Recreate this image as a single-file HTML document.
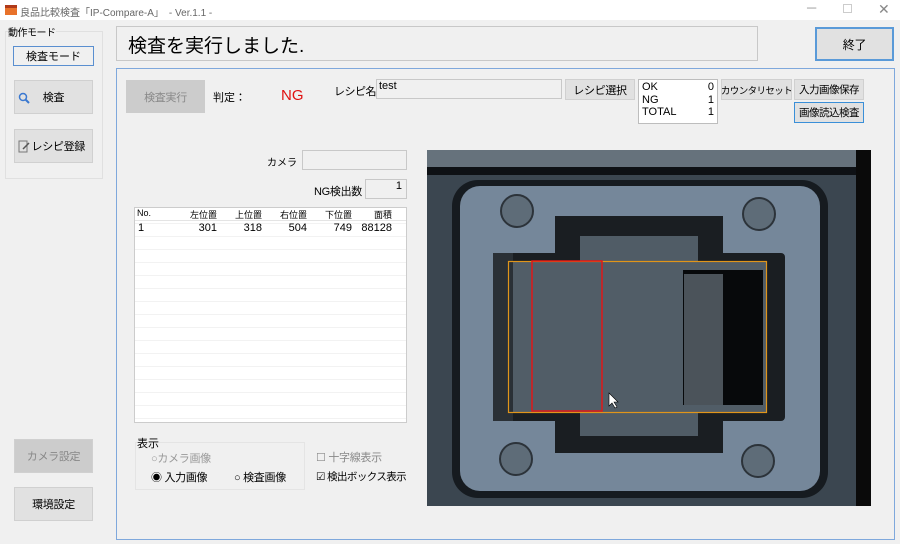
<!DOCTYPE html>
<html><head><meta charset="utf-8"><style>
*{box-sizing:border-box;margin:0;padding:0}
body{width:900px;height:544px;background:#f0f0f0;font-family:"Liberation Sans","Noto Sans CJK JP",sans-serif;font-size:12px;color:#000;position:relative;overflow:hidden;white-space:nowrap}
.a{position:absolute}
.btn{position:absolute;background:#e1e1e1;border:1px solid #d0d0d0;display:flex;align-items:center;justify-content:center;font-size:11px;letter-spacing:-0.3px;white-space:nowrap;overflow:hidden}
.box{position:absolute;background:#f0f0f0;border:1px solid #c8c8c8}
.w{position:absolute;background:#fff;border:1px solid #bdbdbd}
.r{position:absolute;text-align:right}
</style></head><body>
<div class="a" style="left:0;top:0;width:900px;height:20px;background:#fff"></div>
<div class="a" style="left:5px;top:5px;width:12px;height:10px;background:#e8722a;border-top:3px solid #b03a1a"></div>
<div class="a" style="left:20px;top:4px;font-size:10px;color:#666">良品比較検査「IP-Compare-A」　- Ver.1.1 -</div>
<div class="a" style="left:807px;top:0;font-size:13px;color:#999">─</div>
<div class="a" style="left:843px;top:4px;width:9px;height:9px;border:1px solid #ccc"></div>
<div class="a" style="left:878px;top:1px;font-size:14px;color:#888">✕</div>

<div class="a" style="left:5px;top:31px;width:98px;height:148px;border:1px solid #e0e0e0"></div>
<div class="a" style="left:8px;top:24px;font-size:10px;background:#f0f0f0;letter-spacing:-0.5px">動作モード</div>
<div class="a" style="left:13px;top:46px;width:81px;height:20px;border:1px solid #5a8fd0;background:#f0f0f0;display:flex;align-items:center;justify-content:center;font-size:11px">検査モード</div>
<div class="btn" style="left:14px;top:80px;width:79px;height:34px"><svg style="position:absolute;left:3px;top:11px" width="12" height="12"><circle cx="5" cy="5" r="3.5" fill="none" stroke="#3a78d0" stroke-width="1.5"/><path d="M7.5 7.5 L11 11" stroke="#3a78d0" stroke-width="2"/></svg>検査</div>
<div class="btn" style="left:14px;top:129px;width:79px;height:34px;justify-content:flex-end;padding-right:7px"><svg style="position:absolute;left:3px;top:10px" width="12" height="13"><rect x="1" y="1" width="8" height="11" fill="none" stroke="#777"/><path d="M5 9 L11 3" stroke="#555" stroke-width="1.5"/></svg>レシピ登録</div>
<div class="btn" style="left:14px;top:439px;width:79px;height:34px;background:#cccccc;color:#888">カメラ設定</div>
<div class="btn" style="left:14px;top:487px;width:79px;height:34px">環境設定</div>

<div class="box" style="left:116px;top:26px;width:642px;height:35px;"></div>
<div class="a" style="left:128px;top:31px;font-size:19px">検査を実行しました.</div>
<div class="btn" style="left:815px;top:27px;width:79px;height:34px;border:2px solid #5a9ad8;background:#e1e1e1;font-size:12px">終了</div>

<div class="a" style="left:116px;top:68px;width:779px;height:472px;border:1px solid #7fa8dc"></div>
<div class="btn" style="left:126px;top:80px;width:79px;height:33px;background:#cccccc;color:#888;border:none">検査実行</div>
<div class="a" style="left:213px;top:89px;font-size:11px">判定：</div>
<div class="a" style="left:281px;top:87px;font-size:15px;color:#e01010">NG</div>
<div class="a" style="left:334px;top:83px;font-size:11px;letter-spacing:-0.5px">レシピ名</div>
<div class="box" style="left:376px;top:79px;width:186px;height:20px;"></div>
<div class="a" style="left:379px;top:80px;font-size:11px">test</div>
<div class="btn" style="left:565px;top:79px;width:70px;height:21px">レシピ選択</div>
<div class="w" style="left:638px;top:79px;width:80px;height:45px;font-size:11px;line-height:12.5px;padding:1px 3px">
<div style="display:flex;justify-content:space-between"><span>OK</span><span>0</span></div>
<div style="display:flex;justify-content:space-between"><span>NG</span><span>1</span></div>
<div style="display:flex;justify-content:space-between"><span>TOTAL</span><span>1</span></div></div>
<div class="btn" style="left:721px;top:79px;width:71px;height:21px;font-size:9.5px;letter-spacing:-0.6px">カウンタリセット</div>
<div class="btn" style="left:794px;top:79px;width:70px;height:21px;font-size:10.5px;letter-spacing:-0.5px">入力画像保存</div>
<div class="btn" style="left:794px;top:102px;width:70px;height:21px;border:1px solid #3a8fd8;font-size:10.5px;letter-spacing:-0.5px">画像読込検査</div>

<div class="r" style="left:240px;width:57px;top:154px;font-size:10px">カメラ</div>
<div class="box" style="left:302px;top:150px;width:105px;height:20px"></div>
<div class="r" style="left:280px;width:82px;top:183px;font-size:11px;letter-spacing:-0.3px">NG検出数</div>
<div class="box" style="left:365px;top:179px;width:42px;height:20px;text-align:right;padding-right:4px;font-size:11px">1</div>

<div class="w" style="left:134px;top:207px;width:273px;height:216px;border-color:#ccc;background:#fff repeating-linear-gradient(#fff 0 12px,#f2f2f2 12px 13px);background-position:0 3px"></div>
<div class="a" style="left:135px;top:208px;width:271px;height:13px;background:#fff;border-bottom:1px solid #e4e4e4;font-size:9px;display:flex">
<span style="width:40px;padding-left:2px">No.</span><span style="width:45px;text-align:right;padding-right:3px">左位置</span><span style="width:45px;text-align:right;padding-right:3px">上位置</span><span style="width:45px;text-align:right;padding-right:3px">右位置</span><span style="width:45px;text-align:right;padding-right:3px">下位置</span><span style="width:45px;text-align:right;padding-right:8px">面積</span></div>
<div class="a" style="left:135px;top:222px;width:271px;height:13px;font-size:11px;display:flex">
<span style="width:40px;padding-left:3px">1</span><span style="width:45px;text-align:right;padding-right:3px">301</span><span style="width:45px;text-align:right;padding-right:3px">318</span><span style="width:45px;text-align:right;padding-right:3px">504</span><span style="width:45px;text-align:right;padding-right:3px">749</span><span style="width:45px;text-align:right;padding-right:8px">88128</span></div>

<div class="a" style="left:135px;top:442px;width:170px;height:48px;border:1px solid #e4e4e4"></div>
<div class="a" style="left:137px;top:435px;font-size:11px;background:#f0f0f0">表示</div>
<div class="a" style="left:151px;top:450px;font-size:11px;color:#999;letter-spacing:-0.3px">○カメラ画像</div>
<div class="a" style="left:151px;top:469px;font-size:11px;letter-spacing:-0.3px">◉ 入力画像</div>
<div class="a" style="left:234px;top:469px;font-size:11px;letter-spacing:-0.3px">○ 検査画像</div>
<div class="a" style="left:316px;top:449px;font-size:11px;color:#888;letter-spacing:-0.3px">☐ 十字線表示</div>
<div class="a" style="left:316px;top:469px;font-size:10.5px;letter-spacing:-0.6px">☑ 検出ボックス表示</div>

<svg class="a" style="left:427px;top:150px" width="444" height="356" viewBox="427 150 444 356">
<rect x="427" y="150" width="444" height="356" fill="#3b4650"/>
<rect x="427" y="150" width="430" height="18" fill="#66727c"/>
<rect x="427" y="167" width="430" height="8" fill="#0e1115"/>
<rect x="856" y="150" width="15" height="356" fill="#0a0a0a"/>
<rect x="452" y="180" width="376" height="318" rx="26" fill="#161b20"/>
<rect x="460" y="186" width="360" height="305" rx="20" fill="#75879a"/>
<rect x="555" y="216" width="168" height="237" fill="#1a1e22"/>
<rect x="493" y="253" width="292" height="168" rx="4" fill="#1a1e22"/>
<rect x="580" y="236" width="118" height="200" fill="#505c66"/>
<rect x="508" y="262" width="258" height="150" fill="#515d67"/>
<rect x="493" y="253" width="20" height="168" fill="#2a3036"/>
<rect x="683" y="270" width="80" height="135" fill="#07090b"/>
<rect x="684" y="274" width="39" height="131" fill="#4b535a"/>
<g fill="#5e6c78" stroke="#2c333a" stroke-width="2"><circle cx="517" cy="211" r="16"/><circle cx="759" cy="214" r="16"/><circle cx="516" cy="459" r="16"/><circle cx="758" cy="461" r="16"/></g>
<rect x="508.5" y="261.5" width="258" height="151" fill="none" stroke="#e0951a" stroke-width="1.2"/>
<rect x="532" y="261" width="70" height="150" fill="none" stroke="#e01818" stroke-width="1.5"/>
<path d="M609 393 l0 13 l3 -3 l3 5 l2 -1 l-3 -5 l4 0 z" fill="#fff" stroke="#000" stroke-width=".6"/>
</svg>
</body></html>
